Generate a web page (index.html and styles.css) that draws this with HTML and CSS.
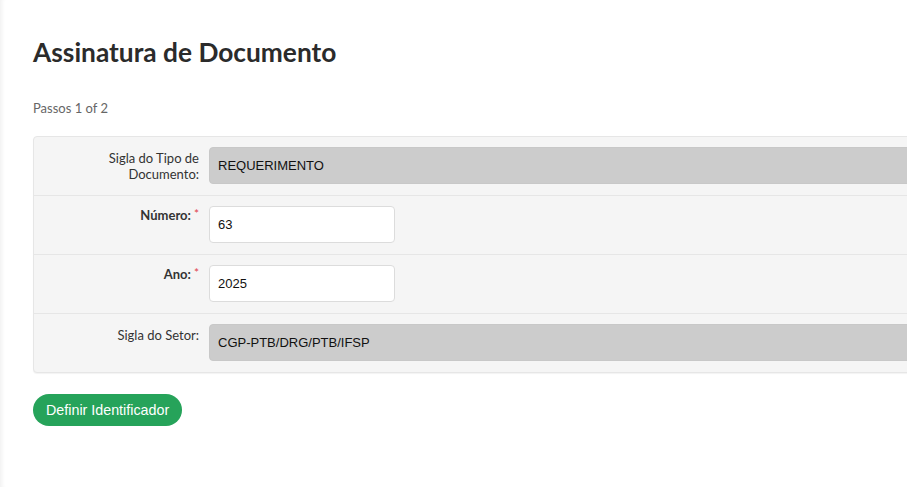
FILE: index.html
```
<!DOCTYPE html>
<html lang="pt-BR">
<head>
<meta charset="utf-8">
<title>Assinatura de Documento</title>
<link rel="stylesheet" href="styles.css">
</head>
<body>
<div class="viewport">
<div class="page">
  <h1 class="title">Assinatura de Documento</h1>
  <p class="steps">Passos 1 of 2</p>
  <form class="panel">
    <div class="row">
      <label class="label">Sigla do Tipo de Documento:</label>
      <div class="field"><input class="input readonly" type="text" value="REQUERIMENTO" readonly></div>
    </div>
    <div class="row">
      <label class="label required">Número:<span class="req">*</span></label>
      <div class="field"><input class="input short" type="text" value="63"></div>
    </div>
    <div class="row">
      <label class="label required">Ano:<span class="req">*</span></label>
      <div class="field"><input class="input short" type="text" value="2025"></div>
    </div>
    <div class="row last">
      <label class="label">Sigla do Setor:</label>
      <div class="field"><input class="input readonly" type="text" value="CGP-PTB/DRG/PTB/IFSP" readonly></div>
    </div>
  </form>
  <button class="btn" type="button">Definir Identificador</button>
</div>
</div>
</body>
</html>
```

FILE: styles.css
```
html, body {
  margin: 0;
  padding: 0;
  background: #fff;
}
body {
  font-family: "Lato", "Liberation Sans", sans-serif;
  color: #333;
}
.viewport {
  width: 907px;
  height: 487px;
  overflow: hidden;
  box-shadow: inset 5px 0 4px -3px rgba(0, 0, 0, 0.06);
}
.page {
  width: 1100px;
  padding: 34px 0 0 33px;
}
.title {
  margin: 0;
  font-size: 26.3px;
  line-height: 36px;
  font-weight: 700;
  color: #2b2b2b;
}
.steps {
  margin: 30px 0 0;
  font-size: 13px;
  line-height: 16px;
  color: #666;
}
.panel {
  margin-top: 20px;
  background: #f5f5f5;
  border: 1px solid #e6e6e6;
  border-radius: 4px;
  box-shadow: 0 1px 1px rgba(0,0,0,0.05);
}
.row {
  display: flex;
  align-items: flex-start;
  padding: 10px 0 11px;
  border-bottom: 1px solid #e6e6e6;
}
.row.last {
  border-bottom: none;
}
.label {
  width: 165px;
  box-sizing: border-box;
  padding: 3px 0 0 20px;
  text-align: right;
  font-size: 13px;
  line-height: 16px;
  color: #333;
  flex: none;
}
.label.required {
  font-weight: 700;
  padding-top: 1px;
}
.req {
  color: #e0424c;
  font-weight: 400;
  font-size: 12px;
  vertical-align: top;
  position: relative;
  top: -1px;
  margin-left: 3px;
}
.field {
  margin-left: 10px;
  flex: 1;
  display: flex;
}
.input {
  box-sizing: border-box;
  height: 37px;
  padding: 0 8px;
  font-family: "Liberation Sans", Arial, sans-serif;
  font-size: 13px;
  color: #111;
  border-radius: 4px;
  outline: none;
}
.input.readonly {
  flex: 1;
  background: #cccccc;
  border: 1px solid #c8c8c8;
}
.input.short {
  width: 186px;
  background: #fff;
  border: 1px solid #dcdcdc;
}
.btn {
  margin-top: 21px;
  height: 32px;
  padding: 0 13px;
  border: none;
  border-radius: 16px;
  background: #26a35a;
  color: #fff;
  font-family: "Liberation Sans", Arial, sans-serif;
  font-size: 14.3px;
  cursor: pointer;
}
```
